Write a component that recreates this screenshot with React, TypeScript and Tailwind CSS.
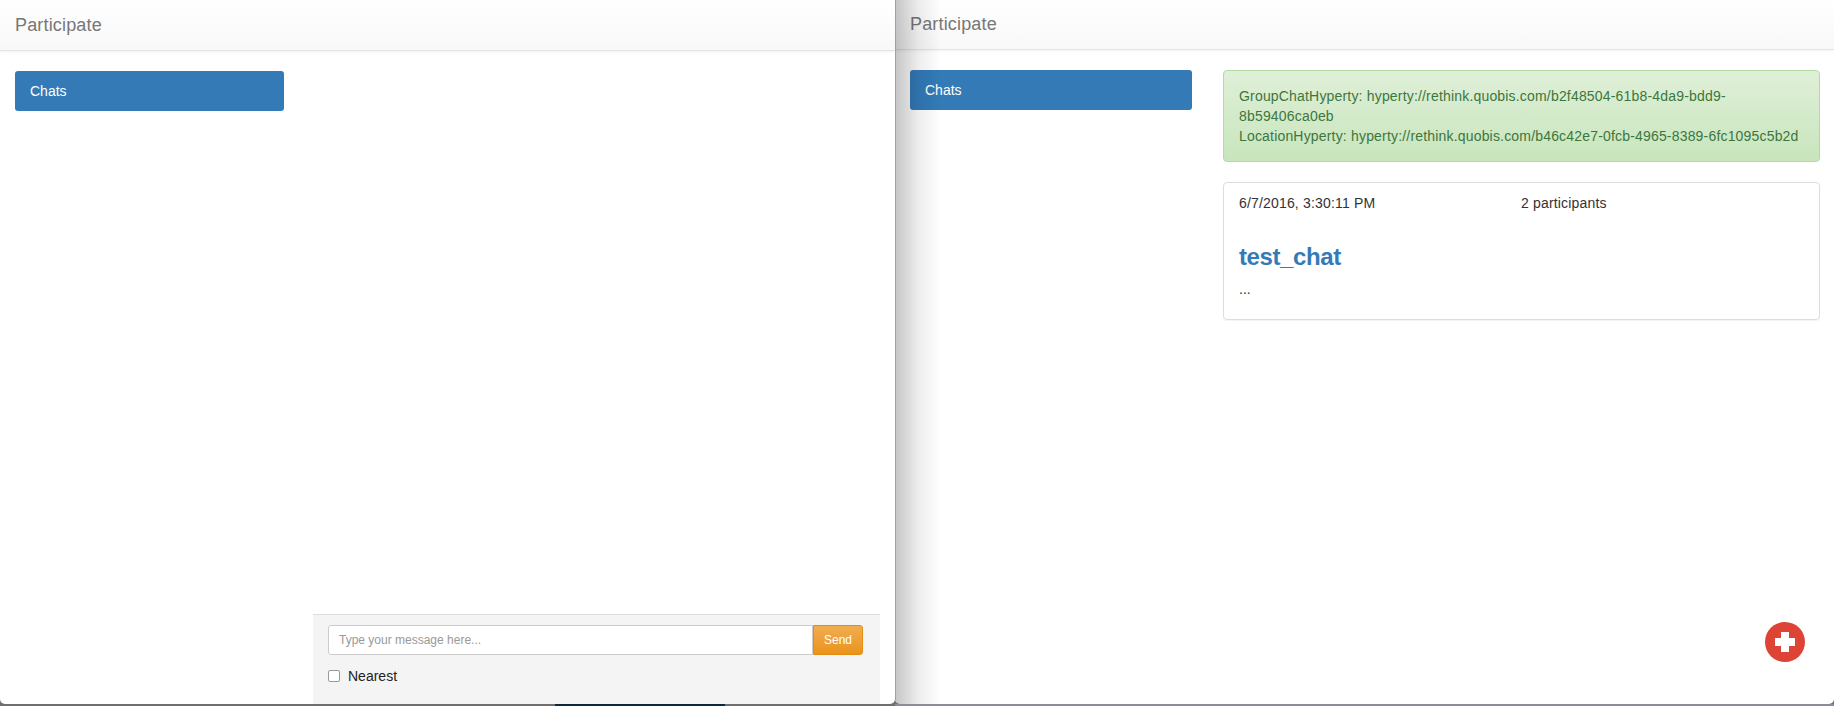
const Navbar = ({ height }: { height: string }) => (
  <div className={`${height} shrink-0 flex items-center px-[15px] bg-gradient-to-b from-white to-[#f8f8f8] border-b border-[#e4e4e4] shadow-[0_1px_3px_rgba(0,0,0,0.06)]`}>
    <span className="text-[18px] tracking-[0.16px] text-[#777777]">Participate</span>
  </div>
);

const ChatsButton = ({ width }: { width: string }) => (
  <div className={`${width} h-10 shrink-0 flex items-center px-[15px] rounded-[3px] bg-[#337ab7] text-white text-sm`}>
    Chats
  </div>
);

const LeftWindow = () => (
  <div className="w-[895px] h-full shrink-0 flex flex-col bg-white rounded-b-[5px] overflow-hidden">
    <Navbar height="h-[51px]" />
    <div className="flex-1 flex min-h-0">
      <div className="w-[313px] shrink-0 pt-5 pl-[15px]">
        <ChatsButton width="w-[269px]" />
      </div>
      <div className="w-[567px] flex flex-col justify-end">
        <div className="h-[90px] bg-[#f4f4f4] border-t border-[#dddddd] pt-[10px] pl-[15px] pr-[17px]">
          <div className="flex h-[30px]">
            <div className="flex-1 flex items-center px-[10px] bg-white border border-[#cccccc] rounded-l-[3px] text-xs text-[#999999]">
              Type your message here...
            </div>
            <div className="w-[50px] flex items-center justify-center rounded-r-[3px] bg-gradient-to-b from-[#f0ad4e] to-[#eb9316] border border-[#e38d13] text-white text-xs">
              Send
            </div>
          </div>
          <label className="flex items-center gap-2 mt-[11px] text-sm text-[#222222]">
            <span className="w-3 h-3 bg-white border border-[#999999] rounded-[2px]" />
            Nearest
          </label>
        </div>
      </div>
    </div>
  </div>
);

const RightWindow = () => (
  <div className="relative flex-1 h-full flex flex-col bg-white rounded-b-[5px] overflow-hidden">
    <Navbar height="h-[50px]" />
    <div className="flex gap-[31px] pt-5 pl-[15px]">
      <ChatsButton width="w-[282px]" />
      <div className="w-[597px] flex flex-col gap-5">
        <div className="h-[92px] p-[15px] rounded-[4px] border border-[#b2dba1] bg-gradient-to-b from-[#dff0d8] to-[#c8e5bc] text-sm leading-[20px] tracking-[0.18px] text-[#3c763d]">
          <div>GroupChatHyperty: hyperty://rethink.quobis.com/b2f48504-61b8-4da9-bdd9-8b59406ca0eb</div>
          <div>LocationHyperty: hyperty://rethink.quobis.com/b46c42e7-0fcb-4965-8389-6fc1095c5b2d</div>
        </div>
        <div className="h-[138px] px-[15px] pt-[10px] rounded-[4px] border border-[#dddddd] shadow-[0_1px_1px_rgba(0,0,0,0.05)] text-sm text-[#333333]">
          <div className="flex leading-[20px] tracking-[0.17px]">
            <span className="w-[282px]">6/7/2016, 3:30:11 PM</span>
            <span>2 participants</span>
          </div>
          <h2 className="mt-[31px] text-2xl leading-[26px] font-bold tracking-[-0.4px] text-[#337ab7]">test_chat</h2>
          <p className="mt-[9px] leading-[20px]">...</p>
        </div>
      </div>
    </div>
    {/* shadow the left window throws on this one */}
    <div className="absolute inset-y-0 left-0 w-[46px] pointer-events-none bg-gradient-to-r from-[#00000038] via-[#00000012] to-transparent border-l border-[#a0a0a0]" />
    {/* add button */}
    <div className="absolute left-[870px] top-[622px] w-10 h-10 rounded-full bg-[#dd4436] flex items-center justify-center">
      <svg width="20" height="20" viewBox="0 0 20 20" fill="#ffffff">
        <path d="M6 0h8v6h6v8h-6v6H6v-6H0V6h6z" />
      </svg>
    </div>
  </div>
);

export default function App() {
  return (
    <div className="relative w-[1834px] h-[706px] overflow-hidden bg-[#6f6f6f] font-['Liberation_Sans',Arial,sans-serif]">
      <div className="relative h-[704px] flex">
        <LeftWindow />
        <RightWindow />
      </div>
      {/* desktop peeking out under the windows */}
      <div className="h-[2px] flex">
        <div className="w-[555px]" />
        <div className="w-[170px] bg-[#10263a]" />
        <div className="w-[170px]" />
        <div className="flex-1 bg-[#8b8b9b]" />
      </div>
    </div>
  );
}
